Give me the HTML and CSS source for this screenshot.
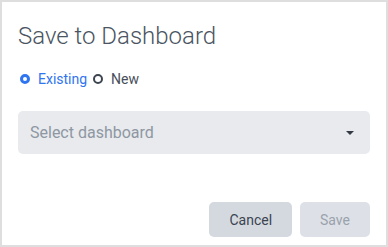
FILE: index.html
```html
<!DOCTYPE html>
<html lang="en">
<head>
  <meta charset="UTF-8">
  <meta name="viewport" content="width=device-width, initial-scale=1.0">
  <title>Save to Dashboard</title>
  <link rel="stylesheet" href="styles.css">
</head>
<body>
  <div class="dialog">
    <h1 class="title">Save to Dashboard</h1>
    <div class="radios">
      <label class="radio checked"><span class="dot"></span>Existing</label>
      <label class="radio"><span class="dot"></span>New</label>
    </div>
    <div class="select">
      <span class="placeholder">Select dashboard</span>
      <span class="caret"></span>
    </div>
    <div class="footer">
      <button class="btn">Cancel</button>
      <button class="btn disabled">Save</button>
    </div>
  </div>
</body>
</html>
```

FILE: styles.css
```css
body {
  margin: 0;
  font-family: Roboto, "Liberation Sans", sans-serif;
  background: #fff;
}
.dialog {
  box-sizing: border-box;
  width: 388px;
  height: 247px;
  border: 2px solid #dedede;
  padding: 20px 16px 8px 16px;
  display: flex;
  flex-direction: column;
}
.title {
  margin: 0;
  font-size: 24px;
  line-height: 28px;
  font-weight: 300;
  color: #4a5462;
}
.radios {
  display: flex;
  align-items: center;
  margin: 20px 0 0 2px;
  font-size: 14px;
  line-height: 18px;
}
.radio {
  display: flex;
  align-items: center;
  gap: 8px;
  color: #474f5b;
  margin-right: 6px;
}
.radio .dot {
  box-sizing: border-box;
  width: 10px;
  height: 10px;
  border-radius: 50%;
  border: 2px solid #3d4550;
}
.radio.checked {
  color: #2f74f0;
}
.radio.checked .dot {
  border: 3px solid #2f74f0;
}
.select {
  margin-top: 23px;
  height: 43px;
  background: #e8eaee;
  border-radius: 5px;
  display: flex;
  align-items: center;
  justify-content: space-between;
  padding: 0 16px 0 12px;
}
.placeholder {
  font-size: 16px;
  color: #8e97a2;
}
.caret {
  width: 0;
  height: 0;
  border-left: 4px solid transparent;
  border-right: 4px solid transparent;
  border-top: 4px solid #333a44;
}
.footer {
  margin-top: auto;
  display: flex;
  justify-content: flex-end;
  gap: 8px;
}
.btn {
  font-family: inherit;
  font-size: 14px;
  height: 35px;
  padding: 0 20px;
  border: none;
  border-radius: 5px;
  background: #d4d9e0;
  color: #3a4350;
  cursor: pointer;
}
.btn.disabled {
  background: #dde1e7;
  color: #9aa2ac;
  cursor: default;
}
```
